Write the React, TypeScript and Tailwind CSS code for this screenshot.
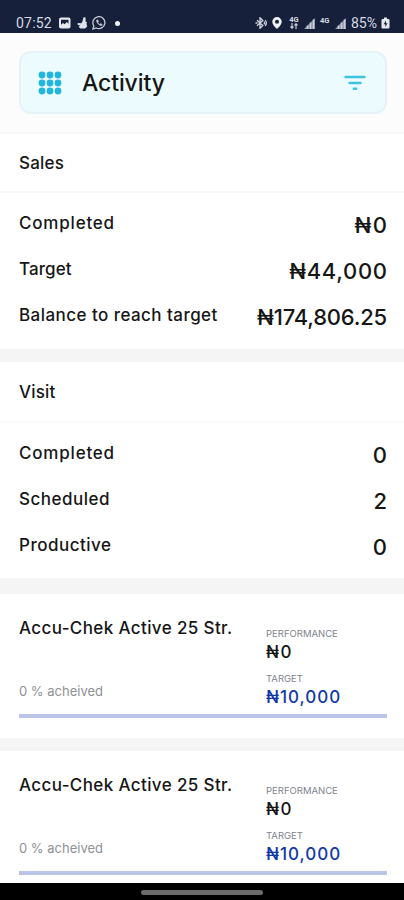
import React from "react";

function StatusBar() {
  return (
    <div className="flex h-[33px] items-end justify-between bg-[#16203a] pb-[3px] pl-4 pr-[14px] text-[#d6d9e2]">
      <div className="flex h-[14px] items-center">
        <span className="w-[37px] whitespace-nowrap font-[Roboto] text-[14px] leading-[14px] tracking-[0.2px]">07:52</span>
        <svg className="ml-[6px]" width="12" height="12" viewBox="0 0 12 12">
          <rect x="0" y="0.5" width="11.5" height="11" rx="2" fill="#e6e8ee" />
          <path d="M2 2.8h7.5v4L7.800 5 5.700 7.200 4 6 2 7.800z" fill="#16203a" />
        </svg>
        <svg className="ml-[6px]" width="12" height="12" viewBox="0 0 12 12">
          <path d="M6.500.3 8.500.5 8.700 4.800 10.200 5.500 9.400 6.600 10.200 9.500 8 11.500H3.400L1.500 9.800 3.200 8.800.5 7.600.8 6 4.300 6.200 5.300 4.800z" fill="#dfe2ea" />
        </svg>
        <svg className="ml-[3px]" width="14" height="14" viewBox="0 0 14 14" fill="none" stroke="#c6cad5">
          <path d="M1 13l.8-3.200A6 6 0 1 1 4.200 12z" strokeWidth="1.300" />
          <path d="M4.500 4c-.3 2.600 2.500 5.600 5.300 5.800l.5-1.400-1.700-.9-.8.8C6.800 7.800 6.200 7 5.900 6.200l.7-.8-.7-1.600z" fill="#c6cad5" strokeWidth=".4" />
        </svg>
        <span className="ml-[9px] mt-px size-[5px] rounded-full bg-[#f1f2f5]" />
      </div>
      <div className="flex h-[14px] items-center">
        <svg width="12" height="12" viewBox="0 0 12 12" fill="none" stroke="#d3d7e0" strokeWidth="1.300">
          <path d="M2 3.300 7.800 8.500 5 11.300V.7l2.800 2.800L2 8.700" />
          <path d="M9 4.500q1 1.500 0 3M10.300 3q2 3 0 6M.5 6h2" />
        </svg>
        <svg className="ml-[5px]" width="10" height="12" viewBox="0 0 10 12">
          <path fillRule="evenodd" d="M5 0a4.700 4.700 0 0 0-4.700 4.700C.3 8 5 12 5 12s4.700-4 4.700-7.300A4.700 4.700 0 0 0 5 0zm0 2.700a2 2 0 1 1 0 4 2 2 0 0 1 0-4z" fill="#f0f1f5" />
        </svg>
        <span className="ml-[7px] flex w-[10px] flex-col items-center font-[Roboto] text-[7.500px] font-bold leading-[6px]">
          <span>4G</span>
          <svg width="8" height="6" viewBox="0 0 8 6" fill="none" stroke="#c3c8d4" strokeWidth="1.200">
            <path d="M2 0v5M.5 3.500 2 5.300 3.500 3.500M6 6V1M4.500 2.500 6 .7 7.500 2.500" />
          </svg>
        </span>
        <Signal className="ml-[5px]" />
        <span className="mb-[6px] ml-[5px] w-[10px] font-[Roboto] text-[7.500px] font-bold leading-[7px]">4G</span>
        <Signal className="ml-[5px]" />
        <span className="ml-[5px] w-[29px] whitespace-nowrap font-[Roboto] text-[14px] leading-[14px]">85%</span>
        <svg className="ml-px" width="9" height="12" viewBox="0 0 9 12">
          <path d="M3 .5h3v1.500h1.500q1 0 1 1V10.500q0 1-1 1h-6q-1 0-1-1V3q0-1 1-1H3z" fill="#e6e8ee" />
          <path d="M5 3.500 2.700 7.300H4.300V10L6.500 6.200H5z" fill="#16203a" />
        </svg>
      </div>
    </div>
  );
}

function Signal({ className }: { className: string }) {
  return (
    <svg className={className} width="11" height="11" viewBox="0 0 11 11">
      <path d="M0 11 11 0v11z" fill="#8b92a4" />
      <path d="M3.500 11V7.500M6.500 11V4.500M9.500 11V1.500" stroke="#c9cdd7" strokeWidth="1.500" />
    </svg>
  );
}

function Header() {
  return (
    <header className="h-[101px] border-b-2 border-[#f7f7f7] bg-[#fcfcfc] pl-[19px] pr-[17px] pt-[18px]">
      <div className="flex h-[63px] items-center rounded-[12px] border-2 border-[#e6f2f7] bg-[#ecfbfd] pl-[17px] pr-[19px]">
        <svg width="24" height="24" viewBox="0 0 24 24" fill="#22b6df">
          {[4, 12, 20].map((y) => [4, 12, 20].map((x) => <circle key={`${x}-${y}`} cx={x} cy={y} r="3.400" />))}
        </svg>
        <h1 className="ml-5 flex-1 text-[23px] font-[450] leading-8 tracking-[-0.1px]">Activity</h1>
        <svg width="22" height="16" viewBox="0 0 22 16" fill="none" stroke="#3fc1e0" strokeWidth="2.400" strokeLinecap="round">
          <path d="M1.500 2h19M5.500 8h11M9.800 13.700h2.400" />
        </svg>
      </div>
    </header>
  );
}

type Row = { label: string; value: string; labelClass: string; valueClass: string };

type SummaryProps = { title: string; headingClass: string; rows: Row[]; className: string };

function Summary({ title, headingClass, rows, className }: SummaryProps) {
  return (
    <section className={className}>
      <h2 className={`flex items-center px-[19px] pt-[3px] text-[17px] font-[450] tracking-[0.2px] ${headingClass}`}>
        {title}
      </h2>
      <div className="pl-[19px] pr-[17px] pt-[8px]">
        {rows.map((row) => (
          <div key={row.label} className="flex h-[46px] items-center justify-between">
            <span className={`text-[17px] font-[450] ${row.labelClass}`}>{row.label}</span>
            <span className={`pt-[2px] text-[22px] font-[450] ${row.valueClass}`}>{row.value}</span>
          </div>
        ))}
      </div>
    </section>
  );
}

function Product({ className }: { className: string }) {
  return (
    <article className={`pl-[19px] pr-[17px] ${className}`}>
      <div className="flex">
        <div className="flex w-[247px] flex-col">
          <h3 className="mt-[22px] whitespace-nowrap text-[17px] font-[450] leading-6 tracking-[0.38px]">Accu-Chek Active 25 Str.</h3>
          <p className="mt-[41px] text-[13px] leading-5 text-[#8d9194]">0 % acheived</p>
        </div>
        <div className="flex flex-col pt-[34px]">
          <span className="text-[9.500px] leading-3 text-[#7e838d]">PERFORMANCE</span>
          <span className="text-[17px] font-[450] leading-6 tracking-[1.5px]">₦0</span>
          <span className="mt-[9px] text-[9.500px] leading-3 text-[#7e838d]">TARGET</span>
          <span className="text-[17px] font-[450] leading-6 tracking-[1px] text-[#1238a8]">₦10,000</span>
        </div>
      </div>
      <div className="mt-[5px] h-[4px] bg-[#b9c4e6]" />
    </article>
  );
}

const sales: Row[] = [
  { label: "Completed", value: "₦0", labelClass: "tracking-[0.8px]", valueClass: "tracking-[1.5px] mr-[-1.5px]" },
  { label: "Target", value: "₦44,000", labelClass: "tracking-[0.1px]", valueClass: "tracking-[0.7px] mr-[-0.7px]" },
  { label: "Balance to reach target", value: "₦174,806.25", labelClass: "tracking-[0.45px]", valueClass: "tracking-[-0.2px]" },
];

const visits: Row[] = [
  { label: "Completed", value: "0", labelClass: "tracking-[0.8px]", valueClass: "" },
  { label: "Scheduled", value: "2", labelClass: "tracking-[0.5px]", valueClass: "" },
  { label: "Productive", value: "0", labelClass: "tracking-[0.5px]", valueClass: "" },
];

export default function App() {
  return (
    <div className="flex h-[900px] w-[404px] flex-col overflow-hidden bg-[#f5f5f5] font-[Inter,sans-serif] text-[#161616]">
      <StatusBar />
      <Header />
      <main className="flex h-[749px] flex-col overflow-hidden">
        <Summary title="Sales" headingClass="h-[59px] border-b-2 border-[#f7f7f7]" rows={sales} className="h-[215px] shrink-0 bg-white" />
        <Summary title="Visit" headingClass="h-[61px] border-b-2 border-[#fafafa]" rows={visits} className="mt-[13px] h-[216px] shrink-0 bg-white" />
        <Product className="mt-[16px] h-[144px] shrink-0 bg-white" />
        <Product className="mt-[13px] h-[132px] shrink-0 bg-white" />
      </main>
      <footer className="flex h-[17px] justify-center bg-black pt-[7px]">
        <div className="h-[5px] w-[122px] rounded-full bg-[#6b6b6b]" />
      </footer>
    </div>
  );
}
